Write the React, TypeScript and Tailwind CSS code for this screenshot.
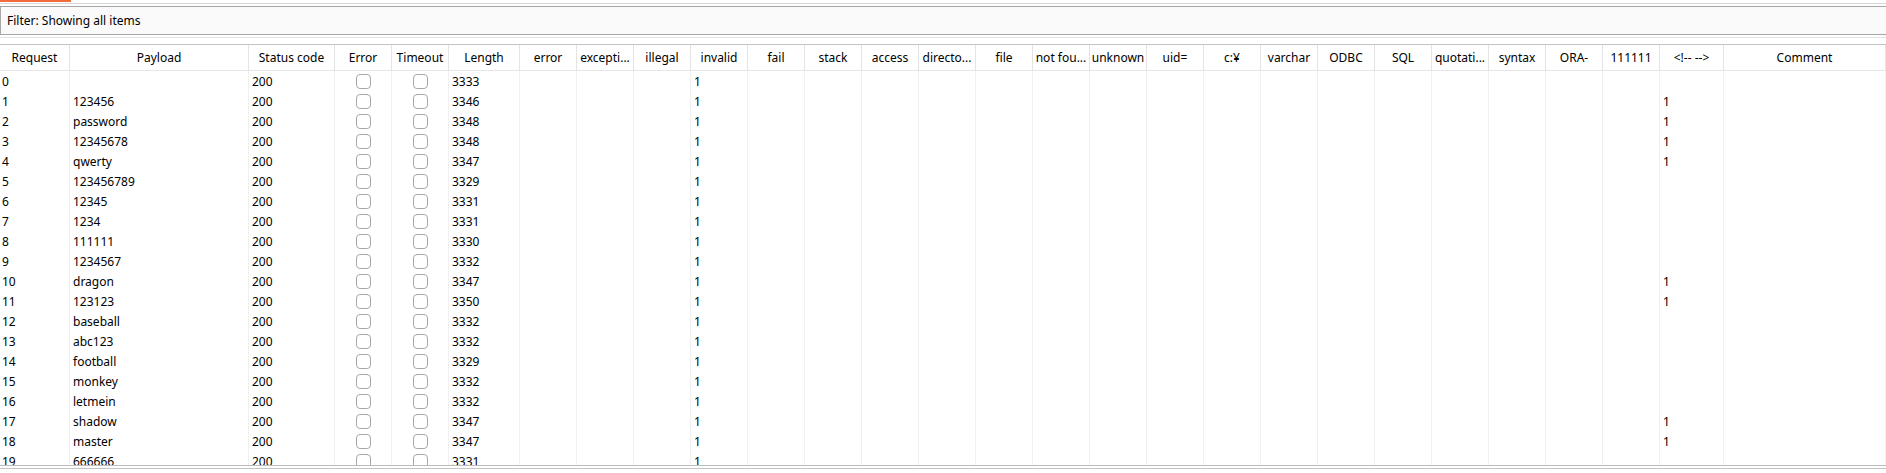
import React from "react";

type Col = { label: string; w: string };

const cols: Col[] = [
  { label: "Request", w: "w-[70px]" },
  { label: "Payload", w: "w-[179px]" },
  { label: "Status code", w: "w-[86px]" },
  { label: "Error", w: "w-[57px]" },
  { label: "Timeout", w: "w-[57px]" },
  { label: "Length", w: "w-[71px]" },
  { label: "error", w: "w-[57px]" },
  { label: "excepti...", w: "w-[57px]" },
  { label: "illegal", w: "w-[57px]" },
  { label: "invalid", w: "w-[57px]" },
  { label: "fail", w: "w-[57px]" },
  { label: "stack", w: "w-[57px]" },
  { label: "access", w: "w-[57px]" },
  { label: "directo...", w: "w-[57px]" },
  { label: "file", w: "w-[57px]" },
  { label: "not fou...", w: "w-[57px]" },
  { label: "unknown", w: "w-[57px]" },
  { label: "uid=", w: "w-[57px]" },
  { label: "c:¥", w: "w-[57px]" },
  { label: "varchar", w: "w-[57px]" },
  { label: "ODBC", w: "w-[57px]" },
  { label: "SQL", w: "w-[57px]" },
  { label: "quotati...", w: "w-[57px]" },
  { label: "syntax", w: "w-[57px]" },
  { label: "ORA-", w: "w-[57px]" },
  { label: "111111", w: "w-[57px]" },
  { label: "<!-- -->", w: "w-[64px]" },
  { label: "Comment", w: "flex-1" },
];

type Row = [string, string, string, boolean];
const rows: Row[] = [
  ["0", "", "3333", false],
  ["1", "123456", "3346", true],
  ["2", "password", "3348", true],
  ["3", "12345678", "3348", true],
  ["4", "qwerty", "3347", true],
  ["5", "123456789", "3329", false],
  ["6", "12345", "3331", false],
  ["7", "1234", "3331", false],
  ["8", "111111", "3330", false],
  ["9", "1234567", "3332", false],
  ["10", "dragon", "3347", true],
  ["11", "123123", "3350", true],
  ["12", "baseball", "3332", false],
  ["13", "abc123", "3332", false],
  ["14", "football", "3329", false],
  ["15", "monkey", "3332", false],
  ["16", "letmein", "3332", false],
  ["17", "shadow", "3347", true],
  ["18", "master", "3347", true],
  ["19", "666666", "3331", false],
];

function Check() {
  return <div className="w-[15px] h-[15px] rounded-[4px] border border-[#a8a8a8] bg-white" />;
}

function cellValue(r: Row, i: number): React.ReactNode {
  switch (i) {
    case 0:
      return r[0];
    case 1:
      return r[1];
    case 2:
      return "200";
    case 3:
    case 4:
      return <Check />;
    case 5:
      return r[2];
    case 9:
      return "1";
    case 26:
      return r[3] ? "1" : "";
    default:
      return "";
  }
}

export default function App() {
  return (
    <div
      className="w-[1886px] h-[473px] bg-white overflow-hidden text-[12px] text-black"
      style={{ fontFamily: '"Noto Sans", "Open Sans", sans-serif' }}
    >
      <div className="h-[3px] flex">
        <div className="w-[71px] h-[2px] bg-[#f26b3a]" />
      </div>
      <div className="h-[1px] bg-[#d6d6d6]" />
      <div className="h-[2px]" />
      <div className="h-[29px] border border-r-0 border-[#a6a6a6] bg-[#fafafa] flex items-center pl-[6px]">
        Filter: Showing all items
      </div>
      <div className="h-[2px]" />
      <div className="h-[1px] bg-[#e3e3e3]" />
      <div className="h-[6px]" />
      <div className="h-[27px] border-t border-b border-t-[#c4c4c4] border-b-[#e6e6e6] flex">
        {cols.map((c, i) => (
          <div
            key={i}
            className={`${c.w} shrink-0 h-full flex items-center justify-center border-r border-[#e3e3e3] whitespace-nowrap overflow-hidden`}
          >
            {c.label}
          </div>
        ))}
      </div>
      <div className="h-[394px] overflow-hidden">
        {rows.map((r, ri) => (
          <div key={ri} className="h-[20px] flex">
            {cols.map((c, i) => (
              <div
                key={i}
                className={`${c.w} shrink-0 h-full flex items-center border-r border-[#f0f0f0] whitespace-nowrap overflow-hidden ${
                  i === 3 || i === 4 ? "justify-center" : i === 0 ? "pl-[2px] pt-px" : "pl-[3px] pt-px"
                }`}
              >
                {cellValue(r, i)}
              </div>
            ))}
          </div>
        ))}
      </div>
      <div className="h-[1px] bg-[#bcbcbc]" />
      <div className="h-[2px]" />
      <div className="h-[1px] bg-[#c4c4c4]" />
    </div>
  );
}
